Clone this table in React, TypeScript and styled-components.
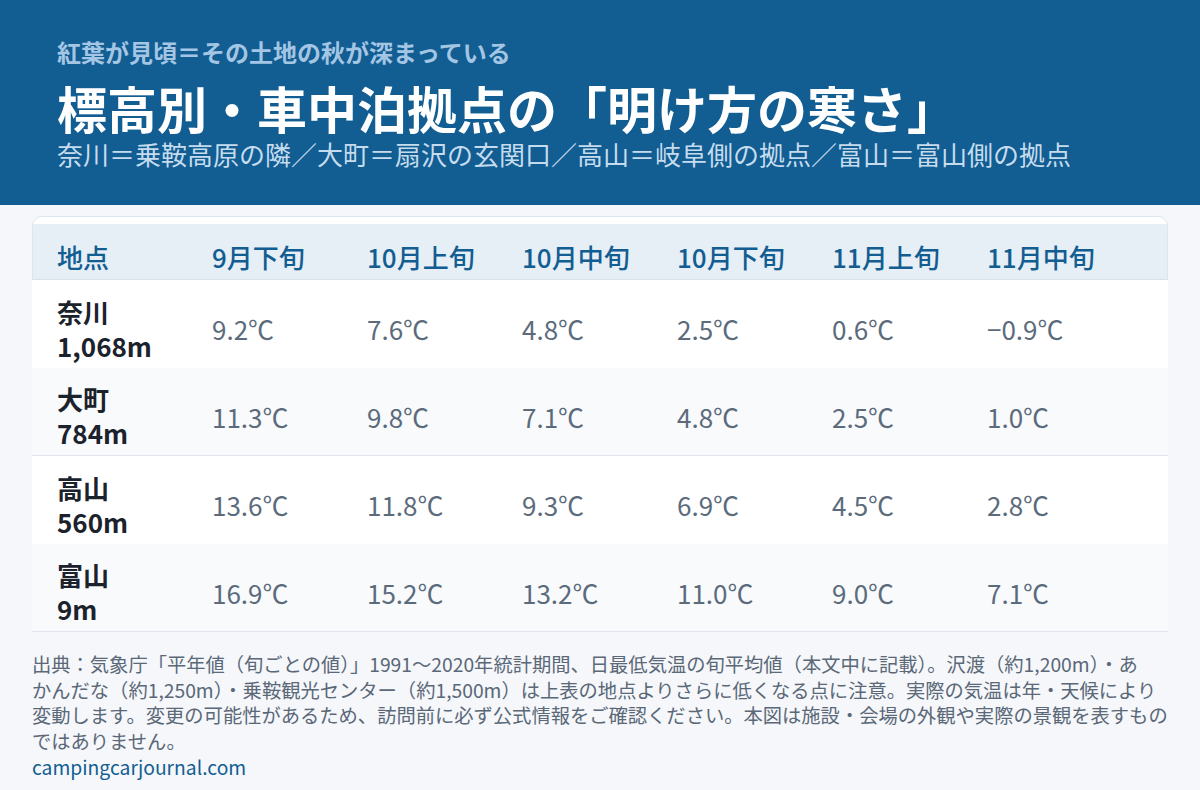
import React from "react";
import styled, { createGlobalStyle } from "styled-components";

const GlobalStyle = createGlobalStyle`
  html, body {
    margin: 0;
    padding: 0;
    background: #f5f7fa;
  }
  body {
    font-family: "Noto Sans CJK JP", "Noto Sans", sans-serif;
    width: 1200px;
    height: 790px;
    overflow: hidden;
  }
`;

const Page = styled.div`
  width: 1200px;
  height: 790px;
  display: flex;
  flex-direction: column;
  background: #f5f7fa;
`;

const Header = styled.header`
  box-sizing: border-box;
  flex-shrink: 0;
  height: 205px;
  padding: 36px 57px 0;
  background: #125d91;
  display: flex;
  flex-direction: column;
`;

const Kicker = styled.div`
  font-size: 24px;
  line-height: 32px;
  font-weight: 700;
  color: #a3c6e4;
  white-space: nowrap;
`;

const Title = styled.h1`
  margin: 11px 0 0;
  font-size: 50px;
  line-height: 56px;
  font-weight: 700;
  color: #ffffff;
  white-space: nowrap;
`;

const Lead = styled.div`
  margin-top: 3px;
  font-size: 26px;
  line-height: 32px;
  font-weight: 400;
  color: #c5dcef;
  white-space: nowrap;
`;

const Main = styled.main`
  padding: 11px 32px 0;
  display: flex;
  flex-direction: column;
`;

const Card = styled.section`
  box-sizing: border-box;
  flex-shrink: 0;
  height: 398px;
  padding-top: 7px;
  border: 1px solid #dde5ee;
  border-radius: 10px;
  background: #ffffff;
  display: flex;
  flex-direction: column;
`;

const HeadRow = styled.div`
  display: grid;
  grid-template-columns: repeat(7, 155px);
  align-items: center;
  flex-shrink: 0;
  height: 56px;
  padding: 9px 0 0 24px;
  background: #e6eef6;
  border-bottom: 1px solid #d8e2ec;
  box-sizing: border-box;
`;

const HeadCell = styled.div`
  font-size: 26px;
  font-weight: 500;
  color: #125d91;
  white-space: nowrap;
`;

const Row = styled.div<{ $alt: boolean }>`
  display: grid;
  grid-template-columns: repeat(7, 155px);
  align-items: center;
  flex-shrink: 0;
  height: 88px;
  box-sizing: border-box;
  margin: 0 -1px;
  padding: 9px 0 0 25px;
  background: ${(p) => (p.$alt ? "#f8fafc" : "#ffffff")};
  border-bottom: ${(p) => (p.$alt ? "1px solid #dfe6ee" : "none")};
`;

const Place = styled.div`
  font-size: 26px;
  line-height: 34px;
  font-weight: 700;
  color: #1b222c;
  white-space: nowrap;
`;

const Temp = styled.div`
  font-size: 26px;
  font-weight: 400;
  color: #5b6b7c;
  white-space: nowrap;
`;

const Note = styled.p`
  margin: 38px -8px 0 0;
  font-size: 19.3px;
  line-height: 25.7px;
  color: #5a6878;
`;

const Site = styled.div`
  font-size: 19.3px;
  line-height: 25.7px;
  color: #135e92;
`;

const columns = ["地点", "9月下旬", "10月上旬", "10月中旬", "10月下旬", "11月上旬", "11月中旬"];

const rows = [
  { name: "奈川", alt: "1,068m", temps: ["9.2℃", "7.6℃", "4.8℃", "2.5℃", "0.6℃", "−0.9℃"] },
  { name: "大町", alt: "784m", temps: ["11.3℃", "9.8℃", "7.1℃", "4.8℃", "2.5℃", "1.0℃"] },
  { name: "高山", alt: "560m", temps: ["13.6℃", "11.8℃", "9.3℃", "6.9℃", "4.5℃", "2.8℃"] },
  { name: "富山", alt: "9m", temps: ["16.9℃", "15.2℃", "13.2℃", "11.0℃", "9.0℃", "7.1℃"] },
];

export default function App() {
  return (
    <Page>
      <GlobalStyle />
      <Header>
        <Kicker>紅葉が見頃＝その土地の秋が深まっている</Kicker>
        <Title>標高別・車中泊拠点の「明け方の寒さ」</Title>
        <Lead>奈川＝乗鞍高原の隣／大町＝扇沢の玄関口／高山＝岐阜側の拠点／富山＝富山側の拠点</Lead>
      </Header>
      <Main>
        <Card>
          <HeadRow>
            {columns.map((c) => (
              <HeadCell key={c}>{c}</HeadCell>
            ))}
          </HeadRow>
          {rows.map((r, i) => (
            <Row key={r.name} $alt={i % 2 === 1}>
              <Place>
                {r.name}
                <br />
                {r.alt}
              </Place>
              {r.temps.map((t, j) => (
                <Temp key={j}>{t}</Temp>
              ))}
            </Row>
          ))}
        </Card>
        <Note>
          出典：気象庁「平年値（旬ごとの値）」1991〜2020年統計期間、日最低気温の旬平均値（本文中に記載）。沢渡（約1,200m）・あ
          <br />
          かんだな（約1,250m）・乗鞍観光センター（約1,500m）は上表の地点よりさらに低くなる点に注意。実際の気温は年・天候により
          <br />
          変動します。変更の可能性があるため、訪問前に必ず公式情報をご確認ください。本図は施設・会場の外観や実際の景観を表すもの
          <br />
          ではありません。
        </Note>
        <Site>campingcarjournal.com</Site>
      </Main>
    </Page>
  );
}
